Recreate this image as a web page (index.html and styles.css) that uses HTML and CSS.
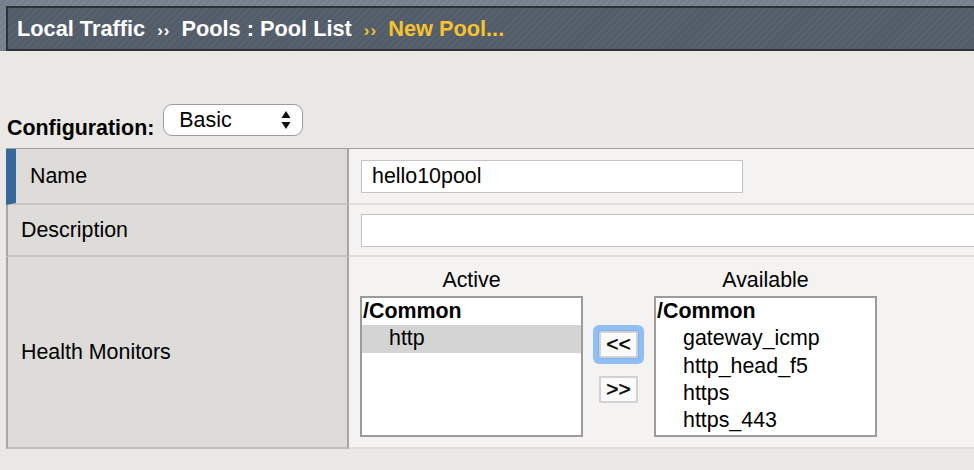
FILE: index.html
```html
<!DOCTYPE html>
<html>
<head>
<meta charset="utf-8">
<link rel="stylesheet" href="styles.css">
</head>
<body>
<div class="banner">
  <div class="crumbs"><span>Local Traffic</span><span class="sep">››</span><span>Pools : Pool List</span><span class="sep cur">››</span><span class="cur">New Pool...</span></div>
</div>
<div class="config">
  <span class="config-label">Configuration:</span>
  <div class="select"><span>Basic</span><svg class="arrows" width="10" height="20" viewBox="0 0 10 20"><path d="M0.5 8 L5 1 L9.5 8 Z M0.5 12 L9.5 12 L5 19 Z" fill="#111"/></svg></div>
</div>
<div class="form">
  <div class="label name">Name</div>
  <div class="field"><input class="text short" type="text" value="hello10pool"></div>
  <div class="label">Description</div>
  <div class="field"><input class="text long" type="text" value=""></div>
  <div class="label last">Health Monitors</div>
  <div class="field last top">
    <div class="monitors">
      <div class="cap">Active</div>
      <div></div>
      <div class="cap">Available</div>
      <div class="list">
        <div class="group">/Common</div>
        <div class="item sel">http</div>
      </div>
      <div class="moves">
        <button class="btn focus">&lt;&lt;</button>
        <button class="btn">&gt;&gt;</button>
      </div>
      <div class="list">
        <div class="group">/Common</div>
        <div class="item">gateway_icmp</div>
        <div class="item">http_head_f5</div>
        <div class="item">https</div>
        <div class="item">https_443</div>
      </div>
    </div>
  </div>
</div>
</body>
</html>
```
FILE: styles.css
```css
* { box-sizing: border-box; }
html, body { margin: 0; padding: 0; }
body {
  width: 974px;
  height: 470px;
  overflow: hidden;
  background: #e9e8e4;
  font-family: "Liberation Sans", Arial, sans-serif;
  font-size: 21.4px;
  color: #000;
}
.banner {
  height: 51px;
  padding: 6px 0 0 6px;
  background: #74808e repeating-linear-gradient(135deg, rgba(255,255,255,0.05) 0 2px, rgba(0,0,0,0) 2px 5px);
}
.crumbs {
  height: 45px;
  border: 2px solid #2e3237;
  border-right: none;
  background: #525d69 repeating-linear-gradient(135deg, rgba(255,255,255,0.03) 0 2px, rgba(0,0,0,0) 2px 5px);
  padding-left: 9px;
  line-height: 41px;
  font-size: 21.75px;
  font-weight: bold;
  color: #fff;
  white-space: nowrap;
}
.sep { font-size: 17px; margin: 0 11px 0 12px; letter-spacing: 1px; }
.cur { color: #f6c22f; }

.config {
  height: 97px;
  display: flex;
  align-items: flex-end;
  padding: 0 0 8px 7px;
  gap: 9px;
}
.config-label { font-weight: bold; line-height: 24px; }
.select {
  width: 140px;
  height: 32px;
  margin-bottom: 4px;
  border: 1.5px solid #9c9c9c;
  border-radius: 9px;
  background: #fff;
  display: flex;
  align-items: center;
  justify-content: space-between;
  padding: 0 11px 0 15px;
  line-height: 28px;
}
.arrows { display: block; }

.form {
  display: grid;
  grid-template-columns: 343px 1fr;
  grid-template-rows: 56px 52px 192px;
  margin-left: 6px;
  border-top: 1px solid #9e9e9e;
}
.label {
  background: #dddcd8;
  border-left: 2px solid #a6a6a6;
  border-right: 2px solid #a6a6a6;
  border-bottom: 2px solid #c6c5c1;
  display: flex;
  align-items: center;
  padding-left: 13px;
}
.label.name { border-left: 10px solid #36699b; padding-left: 14px; }
.label.last { border-bottom-color: #bebdb9; }
.field {
  background: #f4f3f1;
  border-bottom: 2px solid #dfdeda;
  display: flex;
  align-items: center;
  padding-left: 12px;
  overflow: hidden;
  min-width: 0;
}
.field.top { align-items: flex-start; padding: 11px 0 0 11px; }
.text {
  height: 33px;
  border: 1px solid #c4c4c4;
  background: #fff;
  font: inherit;
  color: #000;
  padding: 0 10px;
  outline: none;
  flex: none;
}
.text.short { width: 382px; }
.text.long { width: 640px; }

.monitors {
  display: grid;
  grid-template-columns: 223px 71px 223px;
  grid-template-rows: 24px 141px;
  row-gap: 4px;
}
.cap { text-align: center; line-height: 24px; }
.list {
  border: 2px solid #9b9b9b;
  background: #fff;
  overflow: hidden;
  line-height: 27.3px;
}
.group { font-weight: bold; padding-left: 1px; }
.item { padding-left: 27px; }
.item.sel { background: #d4d4d4; }
.moves {
  display: flex;
  flex-direction: column;
  align-items: center;
  justify-content: center;
  gap: 18px;
}
.btn {
  width: 39px;
  height: 27px;
  padding: 0;
  border: 2px solid #d2d2d2;
  border-radius: 1px;
  background: #fbfbfb;
  font: inherit;
  font-size: 21px;
  line-height: 20px;
  color: #000;
  -webkit-text-stroke: 0.4px #000;
}
.btn.focus { box-shadow: 0 0 0 1px #7fb0ee, 0 0 0 6px #90bff5; border-radius: 2px; }
```
